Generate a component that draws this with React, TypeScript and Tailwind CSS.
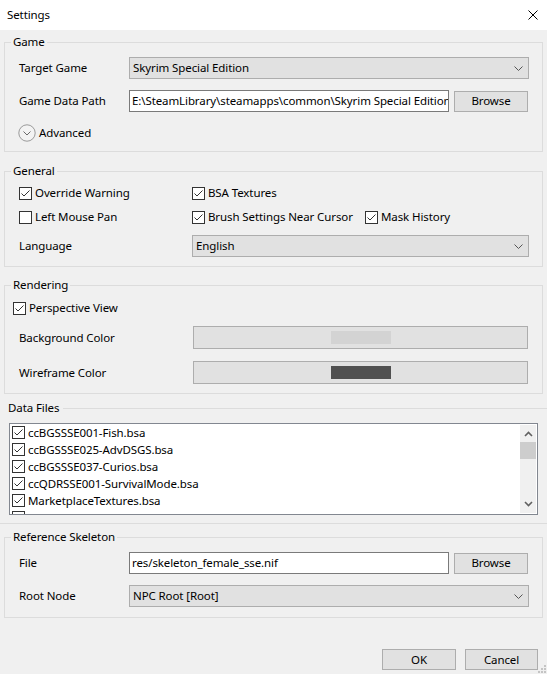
import React from 'react';

const files = [
  'ccBGSSSE001-Fish.bsa',
  'ccBGSSSE025-AdvDSGS.bsa',
  'ccBGSSSE037-Curios.bsa',
  'ccQDRSSE001-SurvivalMode.bsa',
  'MarketplaceTextures.bsa',
  '',
];

function CheckBox({ checked }: { checked: boolean }) {
  return (
    <svg width="13" height="13" viewBox="0 0 13 13" className="shrink-0">
      <rect x="0.5" y="0.5" width="12" height="12" fill="#fff" stroke="#333" />
      {checked && <polyline points="2.5,6.5 5,9 10.5,3.5" fill="none" stroke="#333" strokeWidth="1" />}
    </svg>
  );
}

function Check({ label, checked = true }: { label: string; checked?: boolean }) {
  return (
    <div className="flex items-center h-[20px] gap-[3px] whitespace-nowrap">
      <CheckBox checked={checked} />
      <span>{label}</span>
    </div>
  );
}

function Combo({ value }: { value: string }) {
  return (
    <div className="h-[22px] flex items-center justify-between bg-[#e1e1e1] border border-[#adadad] pl-[3px] pr-[5px]">
      <span>{value}</span>
      <svg width="9" height="5" viewBox="0 0 9 5">
        <polyline points="0.5,0.5 4.5,4.5 8.5,0.5" fill="none" stroke="#555" />
      </svg>
    </div>
  );
}

function Button({ label, className = '' }: { label: string; className?: string }) {
  return (
    <div className={`flex items-center justify-center bg-[#e1e1e1] border border-[#adadad] ${className}`}>
      {label}
    </div>
  );
}

function TextBox({ value }: { value: string }) {
  return (
    <div className="flex-1 min-w-0 h-[22px] flex items-center bg-white border border-[#7a7a7a] px-[2px] overflow-hidden whitespace-nowrap">
      {value}
    </div>
  );
}

function Group({ title, className = '', children }: { title: string; className?: string; children: React.ReactNode }) {
  return (
    <fieldset className={`mx-[4px] min-w-0 border border-[#dcdcdc] pl-[14px] pr-[13px] ${className}`}>
      <legend className="-ml-[8px] px-[2px] leading-[16px]">{title}</legend>
      {children}
    </fieldset>
  );
}

function ColorButton({ color }: { color: string }) {
  return (
    <div className="h-[23px] mr-[1px] flex items-center justify-center bg-[#e1e1e1] border border-[#adadad]">
      <div className="w-[60px] h-[13px]" style={{ backgroundColor: color }} />
    </div>
  );
}

export default function App() {
  return (
    <div className="relative w-[547px] h-[674px] overflow-hidden bg-[#f0f0f0] text-[11.5px] tracking-[-0.1px] text-black font-['Noto_Sans',sans-serif]">
      {/* title bar */}
      <div className="h-[30px] bg-white flex items-center justify-between pl-[7px] pr-[9px]">
        <span>Settings</span>
        <svg width="10" height="10" viewBox="0 0 10 10">
          <path d="M0.5 0.5 L9.5 9.5 M9.5 0.5 L0.5 9.5" stroke="#000" strokeWidth="1" />
        </svg>
      </div>

      <Group title="Game" className="mt-[4px] pt-[7px] pb-[9px]">
        <div className="grid grid-cols-[110px_minmax(0,1fr)] items-center">
          <span>Target Game</span>
          <Combo value="Skyrim Special Edition" />
          <span className="mt-[11px]">Game Data Path</span>
          <div className="mt-[11px] flex items-center gap-[5px] pr-[1px]">
            <TextBox value="E:\SteamLibrary\steamapps\common\Skyrim Special Edition" />
            <Button label="Browse" className="w-[74px] h-[21px] shrink-0" />
          </div>
        </div>
        <div className="mt-[12px] h-[18px] flex items-center gap-[3px] -ml-[1px]">
          <svg width="18" height="18" viewBox="0 0 18 18">
            <circle cx="9" cy="9" r="8.2" fill="#f3f3f3" stroke="#9a9a9a" />
            <polyline points="5.5,7.5 9,11 12.5,7.5" fill="none" stroke="#6a6a6a" />
          </svg>
          <span>Advanced</span>
        </div>
      </Group>

      <Group title="General" className="mt-[11px] pt-[4px] pb-[9px]">
        <div className="grid grid-cols-[173px_173px_minmax(0,1fr)] gap-y-[4px] items-center">
          <Check label="Override Warning" />
          <Check label="BSA Textures" />
          <div />
          <Check label="Left Mouse Pan" checked={false} />
          <Check label="Brush Settings Near Cursor" />
          <Check label="Mask History" />
          <span className="mt-[4px]">Language</span>
          <div className="col-span-2 mt-[4px]">
            <Combo value="English" />
          </div>
        </div>
      </Group>

      <Group title="Rendering" className="mt-[10px] pt-[5px] pb-[9px]">
        <div className="-ml-[6px]">
          <Check label="Perspective View" />
        </div>
        <div className="mt-[8px] grid grid-cols-[174px_minmax(0,1fr)] items-center gap-y-[12px]">
          <span>Background Color</span>
          <ColorButton color="#d3d3d3" />
          <span>Wireframe Color</span>
          <ColorButton color="#505050" />
        </div>
      </Group>

      {/* data files */}
      <div className="mt-[6px] h-[16px] flex items-center pl-[8px]">
        <span className="leading-[16px] pr-[4px]">Data Files</span>
        <div className="flex-1 h-px bg-[#dcdcdc]" />
      </div>
      <div className="mt-[7px] mx-[9px] h-[92px] border border-[#828790] bg-white flex">
        <div className="flex-1 overflow-hidden pl-[2px]">
          {files.map((f, i) => (
            <div key={i} className="h-[17px] flex items-center gap-[3px] whitespace-nowrap">
              <CheckBox checked />
              {f && <span>{f}</span>}
            </div>
          ))}
        </div>
        <div className="w-[16px] mr-[1px] my-[1px] bg-[#f0f0f0] flex flex-col items-center">
          <svg width="9" height="16" viewBox="0 0 9 16" className="mt-[1px]">
            <polyline points="1,10 4.5,6.5 8,10" fill="none" stroke="#606060" strokeWidth="1.6" />
          </svg>
          <div className="w-full h-[17px] bg-[#cdcdcd]" />
          <div className="flex-1" />
          <svg width="9" height="16" viewBox="0 0 9 16" className="mb-[1px]">
            <polyline points="1,6 4.5,9.5 8,6" fill="none" stroke="#606060" strokeWidth="1.6" />
          </svg>
        </div>
      </div>
      <div className="mt-[8px] h-px bg-[#dcdcdc]" />

      <Group title="Reference Skeleton" className="mt-[5px] pt-[7px] pb-[10px]">
        <div className="grid grid-cols-[110px_minmax(0,1fr)] items-center">
          <span>File</span>
          <div className="flex items-center gap-[5px] pr-[1px]">
            <TextBox value="res/skeleton_female_sse.nif" />
            <Button label="Browse" className="w-[74px] h-[21px] shrink-0" />
          </div>
          <span className="mt-[11px]">Root Node</span>
          <div className="mt-[11px]">
            <Combo value="NPC Root [Root]" />
          </div>
        </div>
      </Group>

      <div className="mt-[31px] flex justify-end gap-[9px] pr-[9px]">
        <Button label="OK" className="w-[74px] h-[21px]" />
        <Button label="Cancel" className="w-[73px] h-[21px]" />
      </div>

      {/* size grip */}
      <svg width="12" height="12" viewBox="0 0 12 12" className="absolute right-0 bottom-0">
        <rect x="9" y="3" width="2" height="2" fill="#c4c4c4" />
        <rect x="6" y="6" width="2" height="2" fill="#c4c4c4" />
        <rect x="9" y="6" width="2" height="2" fill="#c4c4c4" />
        <rect x="3" y="9" width="2" height="2" fill="#c4c4c4" />
        <rect x="6" y="9" width="2" height="2" fill="#c4c4c4" />
        <rect x="9" y="9" width="2" height="2" fill="#c4c4c4" />
      </svg>
    </div>
  );
}
